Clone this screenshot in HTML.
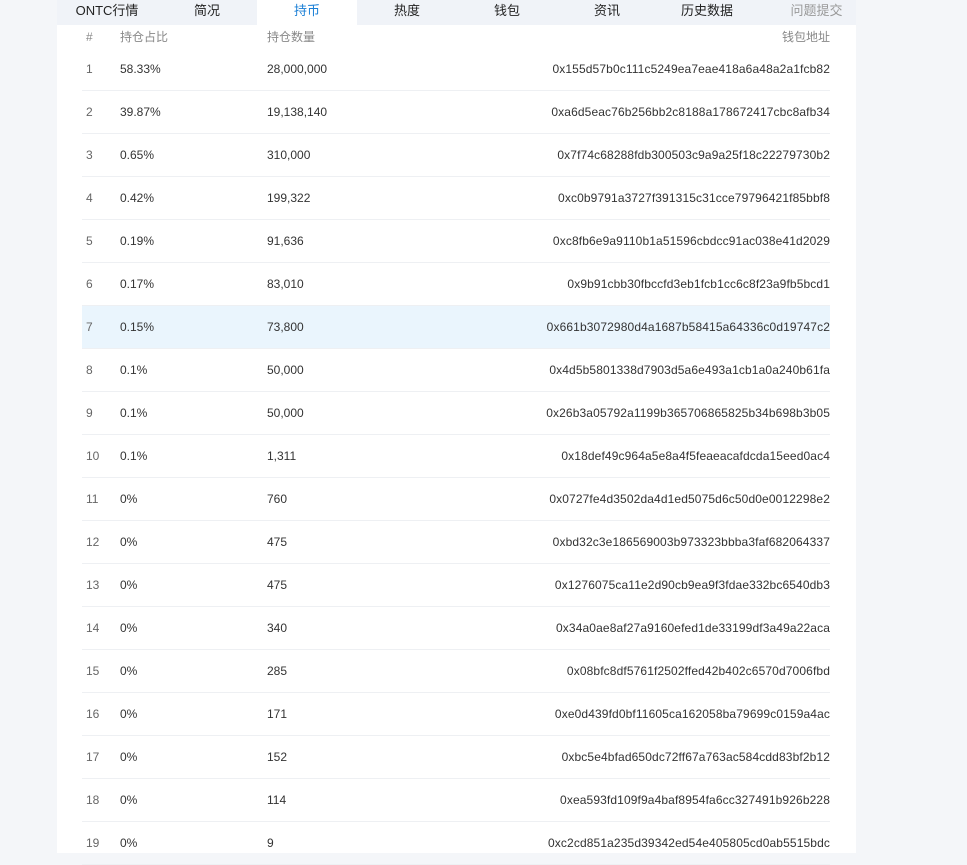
<!DOCTYPE html>
<html><head><meta charset="utf-8"><style>
body{margin:0;background:#f4f6f9;font-family:"Liberation Sans","Noto Sans CJK SC",sans-serif;font-size:12px;color:#333;width:967px;height:853px;overflow:hidden;position:relative}
.panel{position:absolute;left:57px;top:0;width:799px;height:853px;background:#fff}
.tabs{position:absolute;left:57px;top:0;width:799px;height:25px;background:#f0f3f8;display:flex}
.tabs div{width:100px;text-align:center;line-height:22px;font-size:13px;color:#222}
.tabs .on{background:#fff;color:#1a7fd6}
.tabs .last{color:#999;width:99px;padding-left:20px;box-sizing:border-box}
.row{position:absolute;left:82px;width:748px;height:42px;border-bottom:1px solid #eef0f3}
.row span{position:absolute;top:0;line-height:42px}
.c1{left:4px;color:#666}.c2{left:38px}.c3{left:185px}.c4{right:0;letter-spacing:0.12px}
.hd span{color:#888;line-height:20px;letter-spacing:0}
</style></head><body>
<div class="panel"></div>
<div class="tabs"><div>ONTC行情</div><div>简况</div><div class="on">持币</div><div>热度</div><div>钱包</div><div>资讯</div><div>历史数据</div><div class="last">问题提交</div></div>
<div class="row hd" style="top:27px;height:20px;border:none"><span class="c1">#</span><span class="c2">持仓占比</span><span class="c3">持仓数量</span><span class="c4">钱包地址</span></div>
<div class="row" style="top:48px"><span class="c1">1</span><span class="c2">58.33%</span><span class="c3">28,000,000</span><span class="c4">0x155d57b0c111c5249ea7eae418a6a48a2a1fcb82</span></div>
<div class="row" style="top:91px"><span class="c1">2</span><span class="c2">39.87%</span><span class="c3">19,138,140</span><span class="c4">0xa6d5eac76b256bb2c8188a178672417cbc8afb34</span></div>
<div class="row" style="top:134px"><span class="c1">3</span><span class="c2">0.65%</span><span class="c3">310,000</span><span class="c4">0x7f74c68288fdb300503c9a9a25f18c22279730b2</span></div>
<div class="row" style="top:177px"><span class="c1">4</span><span class="c2">0.42%</span><span class="c3">199,322</span><span class="c4">0xc0b9791a3727f391315c31cce79796421f85bbf8</span></div>
<div class="row" style="top:220px"><span class="c1">5</span><span class="c2">0.19%</span><span class="c3">91,636</span><span class="c4">0xc8fb6e9a9110b1a51596cbdcc91ac038e41d2029</span></div>
<div class="row" style="top:263px"><span class="c1">6</span><span class="c2">0.17%</span><span class="c3">83,010</span><span class="c4">0x9b91cbb30fbccfd3eb1fcb1cc6c8f23a9fb5bcd1</span></div>
<div class="row" style="top:306px;background:#eaf5fd"><span class="c1">7</span><span class="c2">0.15%</span><span class="c3">73,800</span><span class="c4">0x661b3072980d4a1687b58415a64336c0d19747c2</span></div>
<div class="row" style="top:349px"><span class="c1">8</span><span class="c2">0.1%</span><span class="c3">50,000</span><span class="c4">0x4d5b5801338d7903d5a6e493a1cb1a0a240b61fa</span></div>
<div class="row" style="top:392px"><span class="c1">9</span><span class="c2">0.1%</span><span class="c3">50,000</span><span class="c4">0x26b3a05792a1199b365706865825b34b698b3b05</span></div>
<div class="row" style="top:435px"><span class="c1">10</span><span class="c2">0.1%</span><span class="c3">1,311</span><span class="c4">0x18def49c964a5e8a4f5feaeacafdcda15eed0ac4</span></div>
<div class="row" style="top:478px"><span class="c1">11</span><span class="c2">0%</span><span class="c3">760</span><span class="c4">0x0727fe4d3502da4d1ed5075d6c50d0e0012298e2</span></div>
<div class="row" style="top:521px"><span class="c1">12</span><span class="c2">0%</span><span class="c3">475</span><span class="c4">0xbd32c3e186569003b973323bbba3faf682064337</span></div>
<div class="row" style="top:564px"><span class="c1">13</span><span class="c2">0%</span><span class="c3">475</span><span class="c4">0x1276075ca11e2d90cb9ea9f3fdae332bc6540db3</span></div>
<div class="row" style="top:607px"><span class="c1">14</span><span class="c2">0%</span><span class="c3">340</span><span class="c4">0x34a0ae8af27a9160efed1de33199df3a49a22aca</span></div>
<div class="row" style="top:650px"><span class="c1">15</span><span class="c2">0%</span><span class="c3">285</span><span class="c4">0x08bfc8df5761f2502ffed42b402c6570d7006fbd</span></div>
<div class="row" style="top:693px"><span class="c1">16</span><span class="c2">0%</span><span class="c3">171</span><span class="c4">0xe0d439fd0bf11605ca162058ba79699c0159a4ac</span></div>
<div class="row" style="top:736px"><span class="c1">17</span><span class="c2">0%</span><span class="c3">152</span><span class="c4">0xbc5e4bfad650dc72ff67a763ac584cdd83bf2b12</span></div>
<div class="row" style="top:779px"><span class="c1">18</span><span class="c2">0%</span><span class="c3">114</span><span class="c4">0xea593fd109f9a4baf8954fa6cc327491b926b228</span></div>
<div class="row" style="top:822px"><span class="c1">19</span><span class="c2">0%</span><span class="c3">9</span><span class="c4">0xc2cd851a235d39342ed54e405805cd0ab5515bdc</span></div>
</body></html>
